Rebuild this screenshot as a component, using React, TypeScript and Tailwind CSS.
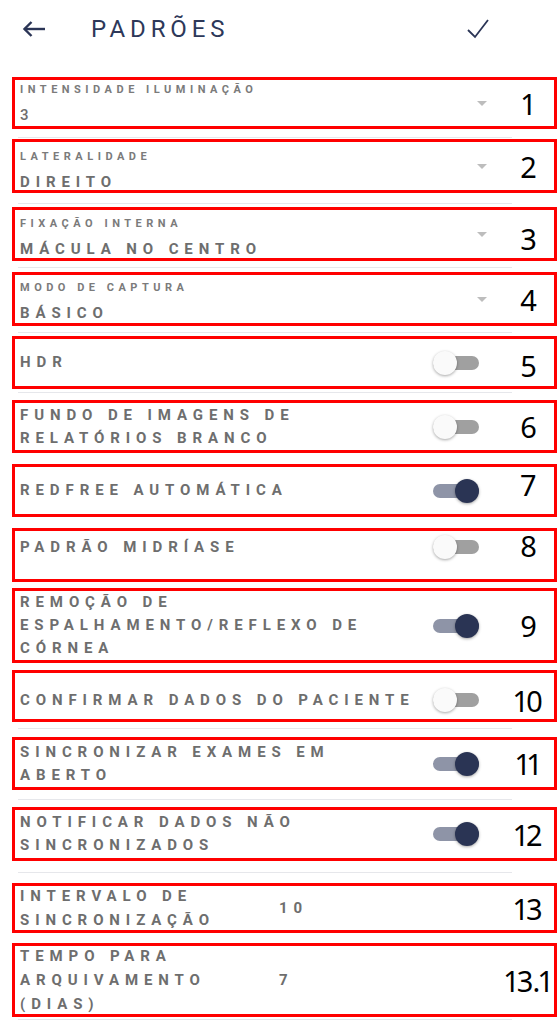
import type { ReactNode } from 'react'

const NAVY = '#2b3556'

function Box({ className, children }: { className: string; children: ReactNode }) {
  return (
    <div className={`ml-[12px] w-[545px] border-[3px] border-[#ff0000] flex items-center pl-[5px] ${className}`}>
      {children}
    </div>
  )
}

function Sep({ className }: { className: string }) {
  return <div className={`ml-[18px] w-[494px] h-px bg-[#e6e7eb] ${className}`} />
}

function Num({ n, className = '' }: { n: string; className?: string }) {
  return (
    <div
      className={`w-[52px] shrink-0 whitespace-nowrap text-center text-[29px] leading-none tracking-[-1px] proportional-nums text-black font-['Noto_Sans',sans-serif] ${className}`}
    >
      {n}
    </div>
  )
}

function Toggle({ on }: { on: boolean }) {
  return (
    <div className="relative w-[46px] h-[24px] shrink-0 mr-[23px]">
      <div className={`absolute left-0 right-0 top-[5px] h-[14px] rounded-full ${on ? 'bg-[#8e94a7]' : 'bg-[#a0a0a0]'}`} />
      <div
        className={`absolute top-0 w-[24px] h-[24px] rounded-full shadow-[0_1px_3px_rgba(0,0,0,0.35)] ${on ? 'right-0 bg-[#2a3454]' : 'left-0 bg-[#fafafa]'}`}
      />
    </div>
  )
}

function Label({ lines, className = 'leading-[23px]' }: { lines: string[]; className?: string }) {
  return (
    <div className={`text-[15px] font-bold tracking-[5.9px] text-[#6e6e6e] whitespace-nowrap ${className}`}>
      {lines.map(l => <div key={l}>{l}</div>)}
    </div>
  )
}

function SelectRow({ box, label, value, n, light, shift = '', numCls }: {
  box: string; label: string; value: string; n: string; light?: boolean; shift?: string; numCls?: string
}) {
  return (
    <Box className={box}>
      <div className={`flex-1 ${shift}`}>
        <div className="text-[11px] leading-[16px] font-bold tracking-[4.5px] text-[#7b7b7b]">{label}</div>
        <div className={`mt-[6px] text-[15px] leading-[22px] tracking-[5.9px] text-[#6e6e6e] ${light ? 'font-medium' : 'font-bold'}`}>
          {value}
        </div>
      </div>
      <div className="w-0 h-0 border-l-[5px] border-r-[5px] border-t-[5px] border-l-transparent border-r-transparent border-t-[#bdbdbd] mr-[15px]" />
      <Num n={n} className={numCls} />
    </Box>
  )
}

function ToggleRow({ box, lines, on, n, numCls }: {
  box: string; lines: string[]; on: boolean; n: string; numCls?: string
}) {
  return (
    <Box className={box}>
      <div className="flex-1">
        <Label lines={lines} />
      </div>
      <Toggle on={on} />
      <Num n={n} className={numCls} />
    </Box>
  )
}

function ValueRow({ box, lines, value, n }: { box: string; lines: string[]; value: string; n: string }) {
  return (
    <Box className={box}>
      <div className="w-[259px]">
        <Label lines={lines} className="leading-[24px]" />
      </div>
      <div className="flex-1 text-[15px] font-bold tracking-[5.9px] text-[#6e6e6e]">{value}</div>
      <Num n={n} />
    </Box>
  )
}

export default function App() {
  return (
    <div className="w-[560px] min-h-[1024px] bg-white font-['Roboto',sans-serif]">
      {/* Header */}
      <div className="flex items-center h-[58px] pl-[22px]">
        <svg width="24" height="16" viewBox="0 0 24 16" fill="none" stroke={NAVY} strokeWidth="2.4" strokeLinejoin="miter">
          <path d="M2.5 8H23" />
          <path d="M9.5 1L2.5 8l7 7" />
        </svg>
        <div className="ml-[45px] text-[24px] tracking-[4.9px] text-[#2d3859]">PADRÕES</div>
        <svg className="ml-auto mr-[70px]" width="24" height="22" viewBox="0 0 24 22" fill="none" stroke={NAVY} strokeWidth="1.8">
          <path d="M2 12l7 7L22 2" />
        </svg>
      </div>

      <SelectRow box="mt-[19px] h-[52px]" label="INTENSIDADE ILUMINAÇÃO" value="3" n="1" light shift="mt-[2px]" />
      <Sep className="mt-[8px]" />
      <SelectRow box="mt-[1px] h-[54px]" label="LATERALIDADE" value="DIREITO" n="2" shift="mt-[9px]" />
      <Sep className="mt-[10px]" />
      <SelectRow box="mt-[3px] h-[54px]" label="FIXAÇÃO INTERNA" value="MÁCULA NO CENTRO" n="3" shift="mt-[8px]" numCls="mt-[8px]" />
      <Sep className="mt-[6px]" />
      <SelectRow box="mt-[4px] h-[54px]" label="MODO DE CAPTURA" value="BÁSICO" n="4" shift="mt-[6px]" />
      <Sep className="mt-[6px]" />
      <ToggleRow box="mt-[3px] h-[53px]" lines={['HDR']} on={false} n="5" numCls="mt-[6px]" />
      <Sep className="mt-[3px]" />
      <ToggleRow box="mt-[7px] h-[53px]" lines={['FUNDO DE IMAGENS DE', 'RELATÓRIOS BRANCO']} on={false} n="6" />
      <ToggleRow box="mt-[11px] h-[53px]" lines={['REDFREE AUTOMÁTICA']} on n="7" numCls="mb-[12px]" />
      <ToggleRow box="mt-[11px] h-[54px] pb-[16px]" lines={['PADRÃO MIDRÍASE']} on={false} n="8" numCls="mb-[4px]" />
      <ToggleRow
        box="mt-[6px] h-[75px]"
        lines={['REMOÇÃO DE', 'ESPALHAMENTO/REFLEXO DE', 'CÓRNEA']}
        on
        n="9"
      />
      <ToggleRow box="mt-[7px] h-[52px] pt-[8px]" lines={['CONFIRMAR DADOS DO PACIENTE']} on={false} n="10" />
      <Sep className="mt-[6px]" />
      <ToggleRow box="mt-[8px] h-[53px]" lines={['SINCRONIZAR EXAMES EM', 'ABERTO']} on n="11" />
      <Sep className="mt-[9px]" />
      <ToggleRow box="mt-[7px] h-[54px]" lines={['NOTIFICAR DADOS NÃO', 'SINCRONIZADOS']} on n="12" />
      <Sep className="mt-[11px]" />
      <ValueRow box="mt-[10px] h-[50px]" lines={['INTERVALO DE', 'SINCRONIZAÇÃO']} value="10" n="13" />
      <ValueRow box="mt-[10px] h-[74px]" lines={['TEMPO PARA', 'ARQUIVAMENTO', '(DIAS)']} value="7" n="13.1" />
      <Sep className="mt-[2px]" />
    </div>
  )
}
